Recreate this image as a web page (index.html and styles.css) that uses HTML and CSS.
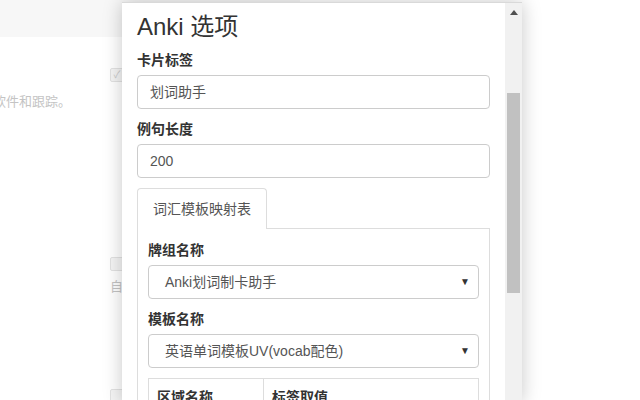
FILE: index.html
```html
<!DOCTYPE html>
<html lang="zh-CN">
<head>
<meta charset="utf-8">
<title>Anki 选项</title>
<link rel="stylesheet" href="styles.css">
</head>
<body>
<div class="page">
  <div class="band"></div>
  <div class="bg-row bg-row-check"><span class="bg-check">&#10003;</span></div>
  <div class="bg-row bg-row-text"><span class="bg-text">软件和跟踪。</span></div>
  <div class="bg-row bg-row-check2"><span class="bg-check"></span></div>
  <div class="bg-row bg-row-zi"><span class="bg-zi">自</span></div>
  <div class="bg-row bg-row-check3"><span class="bg-check"></span></div>
</div>

<div class="popup">
  <div class="content">
    <h3 class="title">Anki 选项</h3>
    <div class="form-group">
      <label class="label">卡片标签</label>
      <div class="input">划词助手</div>
    </div>
    <div class="form-group">
      <label class="label">例句长度</label>
      <div class="input">200</div>
    </div>
    <div class="tabs">
      <div class="tab active">词汇模板映射表</div>
      <div class="tab-rest"></div>
    </div>
    <div class="tab-pane">
      <div class="form-group">
        <label class="label">牌组名称</label>
        <div class="select"><span>Anki划词制卡助手</span><span class="caret">&#9660;</span></div>
      </div>
      <div class="form-group">
        <label class="label">模板名称</label>
        <div class="select"><span>英语单词模板UV(vocab配色)</span><span class="caret">&#9660;</span></div>
      </div>
      <table class="table">
        <tr><th class="col1">区域名称</th><th>标签取值</th></tr>
      </table>
    </div>
  </div>
  <div class="scrollbar">
    <div class="sb-up"></div>
    <div class="sb-thumb"></div>
  </div>
</div>
</body>
</html>
```
FILE: styles.css
```css
html, body {
  margin: 0;
  padding: 0;
  background: #fff;
  font-family: "Liberation Sans", "Noto Sans CJK SC", sans-serif;
  overflow: hidden;
}
.page {
  width: 640px;
  height: 400px;
  position: relative;
  color: #c4c4c4;
  font-size: 13px;
}
.band {
  height: 37px;
  width: 300px;
  background: #f7f7f7;
}
.bg-row {
  display: flex;
  height: 14px;
}
.bg-row-check { margin-top: 31px; padding-left: 110px; }
.bg-row-text { margin-top: 13px; line-height: 14px; }
.bg-row-check2 { margin-top: 148px; padding-left: 110px; }
.bg-row-zi { margin-top: 9px; padding-left: 110px; line-height: 14px; }
.bg-row-check3 { margin-top: 95px; padding-left: 110px; }
.bg-check {
  width: 12px;
  height: 12px;
  border: 1px solid #e2e2e2;
  background: #f4f4f4;
  border-radius: 2px;
  font-size: 10px;
  line-height: 12px;
  color: #c8c8c8;
  text-align: center;
}
.bg-text {
  margin-left: -7px;
  white-space: nowrap;
}
.bg-zi { font-size: 13px; }

.popup {
  position: absolute;
  left: 122px;
  top: 2px;
  width: 400px;
  height: 400px;
  background: #fff;
  border-top: 1px solid #d9d9d9;
  box-shadow: 0 0 18px rgba(0, 0, 0, 0.22);
  display: flex;
  overflow: hidden;
}
.content {
  flex: 1;
  padding: 10px 15px 0 15px;
  color: #333;
  font-size: 14px;
}
.title {
  margin: 0 0 9px 0;
  font-size: 24px;
  font-weight: normal;
  line-height: 28px;
  color: #333;
}
.form-group {
  margin-bottom: 10px;
}
.label {
  display: block;
  font-weight: bold;
  line-height: 20px;
  margin-bottom: 5px;
  color: #333;
}
.input {
  height: 34px;
  box-sizing: border-box;
  border: 1px solid #ccc;
  border-radius: 4px;
  padding: 0 12px;
  line-height: 32px;
  color: #555;
}
.tabs {
  display: flex;
  height: 41px;
}
.tab {
  padding: 10px 15px;
  line-height: 20px;
  border: 1px solid #ddd;
  border-bottom: none;
  border-radius: 4px 4px 0 0;
  color: #555;
}
.tab-rest {
  flex: 1;
  border-bottom: 1px solid #ddd;
}
.tab-pane {
  border: 1px solid #ddd;
  border-top: none;
  padding: 11px 10px 0 10px;
  height: 200px;
}
.select {
  height: 34px;
  box-sizing: border-box;
  border: 1px solid #ccc;
  border-radius: 4px;
  padding: 0 8px 0 16px;
  line-height: 32px;
  color: #555;
  display: flex;
  justify-content: space-between;
}
.caret {
  font-size: 10px;
  color: #333;
}
.table {
  width: 100%;
  border-collapse: collapse;
  border: 1px solid #ddd;
}
.table th {
  text-align: left;
  padding: 8px;
  line-height: 20px;
  border-left: 1px solid #ddd;
  color: #333;
}
.table th.col1 { width: 98px; border-left: none; }

.scrollbar {
  width: 17px;
  background: #f1f1f1;
  display: flex;
  flex-direction: column;
  align-items: center;
}
.sb-up {
  margin-top: 7px;
  width: 0;
  height: 0;
  border-left: 4px solid transparent;
  border-right: 4px solid transparent;
  border-bottom: 5px solid #505050;
}
.sb-thumb {
  margin-top: 78px;
  width: 13px;
  height: 200px;
  background: #c1c1c1;
}
```
